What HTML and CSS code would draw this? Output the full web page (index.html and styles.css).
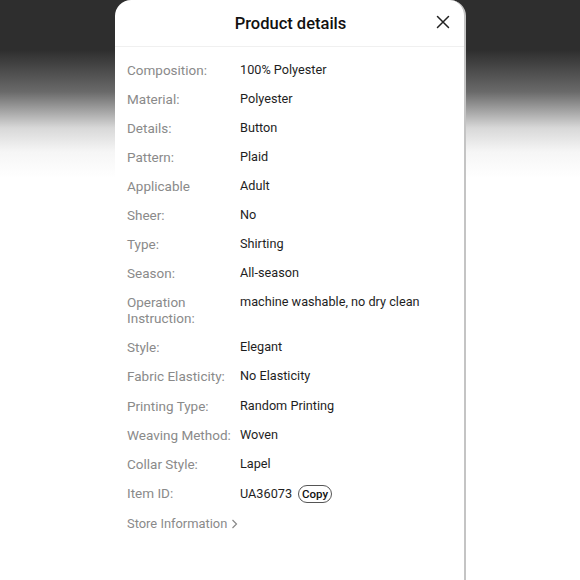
FILE: index.html
```html
<!DOCTYPE html>
<html lang="en">
<head>
<meta charset="utf-8">
<title>Product details</title>
<link rel="stylesheet" href="styles.css">
</head>
<body>
<div class="page">
  <div class="sheet">
    <div class="sheet-header">
      <h1 class="title">Product details</h1>
      <button class="close" aria-label="Close">
        <svg width="14" height="14" viewBox="0 0 14 14"><path d="M1.5 1.5L12.5 12.5M12.5 1.5L1.5 12.5" stroke="#222" stroke-width="1.5" fill="none" stroke-linecap="round"/></svg>
      </button>
    </div>
    <div class="sheet-body">
      <div class="row"><div class="label">Composition:</div><div class="value">100% Polyester</div></div>
      <div class="row"><div class="label">Material:</div><div class="value">Polyester</div></div>
      <div class="row"><div class="label">Details:</div><div class="value">Button</div></div>
      <div class="row"><div class="label">Pattern:</div><div class="value">Plaid</div></div>
      <div class="row"><div class="label">Applicable</div><div class="value">Adult</div></div>
      <div class="row"><div class="label">Sheer:</div><div class="value">No</div></div>
      <div class="row"><div class="label">Type:</div><div class="value">Shirting</div></div>
      <div class="row"><div class="label">Season:</div><div class="value">All-season</div></div>
      <div class="row"><div class="label">Operation Instruction:</div><div class="value">machine washable, no dry clean</div></div>
      <div class="row"><div class="label">Style:</div><div class="value">Elegant</div></div>
      <div class="row"><div class="label">Fabric Elasticity:</div><div class="value">No Elasticity</div></div>
      <div class="row"><div class="label">Printing Type:</div><div class="value">Random Printing</div></div>
      <div class="row"><div class="label">Weaving Method:</div><div class="value">Woven</div></div>
      <div class="row"><div class="label">Collar Style:</div><div class="value">Lapel</div></div>
      <div class="row"><div class="label">Item ID:</div><div class="value id-value">UA36073 <span class="copy">Copy</span></div></div>
      <div class="store"><span>Store Information</span>
        <svg width="7" height="10" viewBox="0 0 7 10"><path d="M1.5 1L5.5 5L1.5 9" stroke="#888" stroke-width="1.2" fill="none"/></svg>
      </div>
    </div>
  </div>
</div>
</body>
</html>
```

FILE: styles.css
```css
* { box-sizing: border-box; }
html, body {
  margin: 0;
  padding: 0;
  height: 100%;
}
body {
  font-family: Roboto, "Noto Sans", Arial, sans-serif;
  background: linear-gradient(to bottom, #2e2e2e 0px, #2e2e2e 50px, #6a6a6a 92px, #d8d8d8 128px, #f6f6f6 152px, #ffffff 178px, #ffffff 100%);
  overflow: hidden;
}
.page {
  height: 580px;
  padding-left: 115px;
}
.sheet {
  width: 351px;
  height: 580px;
  background: #fff;
  border-radius: 16px 16px 0 0;
  border-right: 2px solid #c4c4c4;
  display: flex;
  flex-direction: column;
}
.sheet-header {
  height: 47px;
  border-bottom: 1px solid #f0f0f0;
  display: flex;
  align-items: center;
  justify-content: center;
  position: relative;
}
.title {
  margin: 0;
  font-size: 16.5px;
  font-weight: 500;
  color: #111;
  padding-left: 2px;
}
.close {
  position: absolute;
  right: 14px;
  top: 15px;
  width: 14px;
  height: 14px;
  padding: 0;
  border: 0;
  background: none;
  display: flex;
}
.sheet-body {
  padding: 15px 12px 0 12px;
  display: flex;
  flex-direction: column;
  gap: 13.05px;
  line-height: 16px;
}
.row {
  display: flex;
}
.label {
  width: 113px;
  flex: none;
  color: #8a8a8a;
  font-size: 13.5px;
  padding-right: 8px;
}
.value {
  color: #1e1e1e;
  font-size: 12.7px;
}
.id-value {
  display: flex;
  align-items: center;
}
.copy {
  margin-left: 6px;
  font-size: 11.5px;
  font-weight: 500;
  line-height: 14px;
  padding: 1px 3px;
  border: 1px solid #555;
  border-radius: 9px;
  color: #111;
}
.store {
  color: #8a8a8a;
  font-size: 12.9px;
  height: 16px;
  display: flex;
  align-items: center;
  gap: 4px;
}
```
